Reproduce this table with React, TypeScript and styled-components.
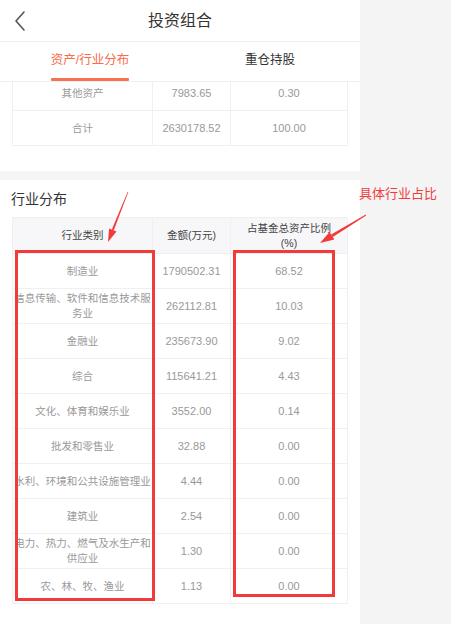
import React from "react";
import styled, { createGlobalStyle } from "styled-components";

const Global = createGlobalStyle`
  html, body { margin: 0; padding: 0; background: #f4f4f4; }
  body { font-family: "Liberation Sans", "Noto Sans CJK SC", sans-serif; }
  * { box-sizing: border-box; }
`;

const Page = styled.div`
  position: relative;
  width: 451px;
  height: 624px;
  display: flex;
  overflow: hidden;
`;

const Phone = styled.div`
  width: 360px;
  height: 624px;
  background: #fff;
  display: flex;
  flex-direction: column;
  overflow: hidden;
`;

const Side = styled.div`
  flex: 1;
  background: #f4f4f4;
`;

const Header = styled.div`
  height: 42px;
  flex-shrink: 0;
  border-bottom: 1px solid #efefef;
  display: grid;
  grid-template-columns: 40px 1fr 40px;
  align-items: center;
`;

const Back = styled.div`
  display: flex;
  align-items: center;
  justify-content: center;
  padding-right: 1px;
`;

const Title = styled.div`
  text-align: center;
  font-size: 16px;
  color: #333;
  line-height: 20px;
`;

const TabBar = styled.div`
  height: 40px;
  flex-shrink: 0;
  display: flex;
  border-bottom: 1px solid #f0f0f0;
`;

const Tab = styled.div<{ $active?: boolean }>`
  flex: 1;
  display: flex;
  flex-direction: column;
  align-items: center;
  justify-content: flex-end;
  color: ${(p) => (p.$active ? "#f86c4a" : "#333")};
  font-size: 12.5px;
`;

const TabLabel = styled.div`
  line-height: 17px;
  margin-bottom: 9px;
`;

const Underline = styled.div<{ $active?: boolean }>`
  width: 78px;
  height: 3px;
  border-radius: 1px;
  background: ${(p) => (p.$active ? "#f8704e" : "transparent")};
`;

const Clip = styled.div`
  overflow: hidden;
  flex-shrink: 0;
  padding: 0 13px 0 12px;
`;

const Table = styled.table<{ $shift?: number }>`
  width: 335px;
  border-collapse: collapse;
  table-layout: fixed;
  margin-top: ${(p) => (p.$shift ? `-${p.$shift}px` : "0")};
`;

const Th = styled.th`
  height: 36px;
  background: #f7f7f9;
  border: 1px solid #f0f0f2;
  font-weight: normal;
  font-size: 10.5px;
  line-height: 15px;
  color: #444;
  padding: 0;
  text-align: center;
`;

const Td = styled.td`
  height: 35px;
  border: 1px solid #f0f0f0;
  font-size: 10.5px;
  line-height: 15px;
  color: #999;
  padding: 0;
  text-align: center;
  white-space: normal;
`;

const NumTd = styled(Td)`
  font-size: 11px;
`;

const Band = styled.div`
  height: 9px;
  flex-shrink: 0;
  margin-top: 25px;
  background: #f4f5f7;
`;

const Section = styled.div`
  display: flex;
  flex-direction: column;
  padding: 0 13px 0 12px;
`;

const SectionTitle = styled.div`
  font-size: 14px;
  line-height: 18px;
  color: #333;
  padding: 10px 0 9px 0;
  margin-left: -1px;
`;

const Overlay = styled.svg`
  position: absolute;
  left: 0;
  top: 0;
  pointer-events: none;
`;

const Note = styled.div`
  position: absolute;
  left: 359px;
  top: 185px;
  font-size: 13px;
  line-height: 16px;
  color: #f23b3b;
  font-family: "Noto Sans CJK SC", sans-serif;
`;

const topRows = [
  ["其他资产", "7983.65", "0.30"],
  ["合计", "2630178.52", "100.00"],
];

const industryRows = [
  ["制造业", "1790502.31", "68.52"],
  ["信息传输、软件和信息技术服务业", "262112.81", "10.03"],
  ["金融业", "235673.90", "9.02"],
  ["综合", "115641.21", "4.43"],
  ["文化、体育和娱乐业", "3552.00", "0.14"],
  ["批发和零售业", "32.88", "0.00"],
  ["水利、环境和公共设施管理业", "4.44", "0.00"],
  ["建筑业", "2.54", "0.00"],
  ["电力、热力、燃气及水生产和供应业", "1.30", "0.00"],
  ["农、林、牧、渔业", "1.13", "0.00"],
];

const Cols = () => (
  <colgroup>
    <col style={{ width: 140 }} />
    <col style={{ width: 78 }} />
    <col style={{ width: 117 }} />
  </colgroup>
);

const RED = "#f23a3a";

export default function App() {
  return (
    <>
      <Global />
      <Page>
        <Phone>
          <Header>
            <Back>
              <svg width="14" height="22" viewBox="0 0 14 22">
                <path d="M11 2 L3 11 L11 20" fill="none" stroke="#555" strokeWidth="1.6" strokeLinecap="round" strokeLinejoin="round" />
              </svg>
            </Back>
            <Title>投资组合</Title>
            <div />
          </Header>
          <TabBar>
            <Tab $active>
              <TabLabel>资产/行业分布</TabLabel>
              <Underline $active />
            </Tab>
            <Tab>
              <TabLabel>重仓持股</TabLabel>
              <Underline />
            </Tab>
          </TabBar>
          <Clip>
            <Table $shift={7}>
              <Cols />
              <tbody>
                {topRows.map((r) => (
                  <tr key={r[0]}>
                    <Td>{r[0]}</Td>
                    <NumTd>{r[1]}</NumTd>
                    <NumTd>{r[2]}</NumTd>
                  </tr>
                ))}
              </tbody>
            </Table>
          </Clip>
          <Band />
          <Section>
            <SectionTitle>行业分布</SectionTitle>
            <Table>
              <Cols />
              <thead>
                <tr>
                  <Th>行业类别</Th>
                  <Th>金额(万元)</Th>
                  <Th>
                    占基金总资产比例
                    <br />
                    (%)
                  </Th>
                </tr>
              </thead>
              <tbody>
                {industryRows.map((r) => (
                  <tr key={r[0]}>
                    <Td>{r[0]}</Td>
                    <NumTd>{r[1]}</NumTd>
                    <NumTd>{r[2]}</NumTd>
                  </tr>
                ))}
              </tbody>
            </Table>
          </Section>
        </Phone>
        <Side />
        <Overlay width="451" height="624" viewBox="0 0 451 624">
          <rect x="16.5" y="251.5" width="137" height="348" fill="none" stroke={RED} strokeWidth="3" />
          <rect x="234.5" y="251.5" width="99" height="344" fill="none" stroke={RED} strokeWidth="3" />
          <polygon points="128.3,192 127.7,191.8 111.8,229.5 113.8,230.3" fill={RED} />
          <polygon points="108,242 116.5,231.4 109.1,228.4" fill={RED} />
          <polygon points="366.2,215.4 365.8,214.6 331.2,234.4 332.8,237" fill={RED} />
          <polygon points="320,243 334.3,239.6 329.6,231.9" fill={RED} />
        </Overlay>
        <Note>具体行业占比</Note>
      </Page>
    </>
  );
}
